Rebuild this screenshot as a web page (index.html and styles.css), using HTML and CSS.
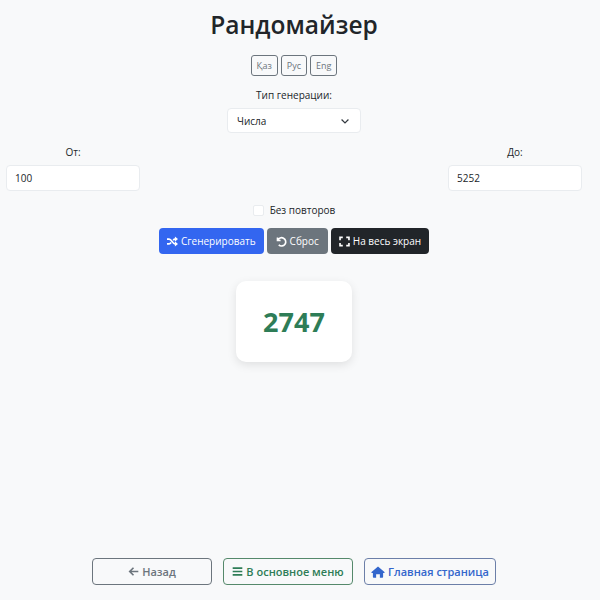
FILE: index.html
```html
<!DOCTYPE html>
<html lang="ru">
<head>
    <meta charset="UTF-8">
    <meta name="viewport" content="width=device-width, initial-scale=1.0">
    <title>Рандомайзер</title>
    <link rel="stylesheet" href="styles.css">
</head>
<body>
    <main class="page">
        <h1>Рандомайзер</h1>

        <div class="langs">
            <button class="lang">Қаз</button>
            <button class="lang">Рус</button>
            <button class="lang">Eng</button>
        </div>

        <div class="type-group">
            <label for="type">Тип генерации:</label>
            <div class="select">
                <span>Числа</span>
                <svg class="chevron" viewBox="0 0 16 16"><path d="M2.500 5.500 8 11l5.500-5.500"/></svg>
            </div>
        </div>

        <div class="range">
            <div class="range-field">
                <label for="from">От:</label>
                <input type="text" id="from" value="100">
            </div>
            <div class="range-field">
                <label for="to">До:</label>
                <input type="text" id="to" value="5252">
            </div>
        </div>

        <label class="check">
            <span class="box"></span>
            Без повторов
        </label>

        <div class="actions">
            <button class="btn btn-primary">
                <svg class="icon" viewBox="0 0 16 16"><path class="line" d="M0 4.500h3c3.800 0 5 7 8.500 7H13M0 11.500h3c1.300 0 2.200-.9 3-2M9 6.200c.8-1 1.500-1.700 2.500-1.700H13"/><path d="M11.500.8 16 4.500l-4.500 3.700zM11.500 7.800l4.500 3.700-4.500 3.700z"/></svg>
                Сгенерировать
            </button>
            <button class="btn btn-secondary">
                <svg class="icon" viewBox="0 0 16 16"><path class="line" d="M2.200 2v4.500h4.500M2.500 6.500A6 6 0 1 1 4 12.800"/></svg>
                Сброс
            </button>
            <button class="btn btn-dark">
                <svg class="icon" viewBox="0 0 16 16"><path class="line" d="M1.500 6V2h4M10.500 2h4v4M14.500 10v4h-4M5.500 14h-4v-4"/></svg>
                На весь экран
            </button>
        </div>

        <div class="result">2747</div>

        <nav class="bottom">
            <a class="nav-btn nav-back" href="#">
                <svg class="icon" viewBox="0 0 16 16"><path class="line" d="M15 8H3M8 2.500 2.500 8 8 13.500"/></svg>
                Назад
            </a>
            <a class="nav-btn nav-menu" href="#">
                <svg class="icon" viewBox="0 0 16 16"><path class="line" d="M1 3h14M1 8h14M1 13h14"/></svg>
                В основное меню
            </a>
            <a class="nav-btn nav-home" href="#">
                <svg class="icon icon-home" viewBox="0 0 18 16"><path d="M9 .5 17.600 8a.8.8 0 0 1-.6 1.300h-1.200v5.200a1 1 0 0 1-1 1h-3.300v-4.500H6.500v4.500H3.200a1 1 0 0 1-1-1V9.300H1A.8.8 0 0 1 .4 8z"/></svg>
                Главная страница
            </a>
        </nav>
    </main>
</body>
</html>
```

FILE: styles.css
```css
* {
    box-sizing: border-box;
}
body {
    margin: 0;
    font-family: "Open Sans", "Noto Sans", Arial, sans-serif;
    background-color: #f8f9fa;
    color: #212529;
}
.page {
    width: 588px;
    height: 600px;
    display: flex;
    flex-direction: column;
    align-items: center;
    padding: 0 6px 15px;
}
h1 {
    margin: 7px 0 0;
    font-size: 24.500px;
    line-height: 36px;
    font-weight: 600;
}
.langs {
    display: flex;
    gap: 3px;
    margin-top: 12px;
}
.lang {
    height: 21px;
    padding: 0 5px;
    font: 9px "Open Sans", Arial, sans-serif;
    color: #6c757d;
    background: transparent;
    border: 1px solid #6c757d;
    border-radius: 3px;
}
.type-group {
    display: flex;
    flex-direction: column;
    align-items: center;
    margin-top: 11px;
}
label {
    font-size: 10px;
    line-height: 16px;
}
.select {
    width: 134px;
    height: 25px;
    margin-top: 5px;
    padding: 0 10px 0 9px;
    display: flex;
    align-items: center;
    justify-content: space-between;
    font-size: 10px;
    background-color: white;
    border: 1px solid #e9ecef;
    border-radius: 4px;
}
.chevron {
    width: 10px;
    height: 10px;
    fill: none;
    stroke: #343a40;
    stroke-width: 2;
}
.range {
    width: 100%;
    display: flex;
    justify-content: space-between;
    margin-top: 11px;
}
.range-field {
    width: 134px;
    display: flex;
    flex-direction: column;
    align-items: center;
    gap: 5px;
}
.range-field input {
    width: 100%;
    height: 26px;
    padding: 0 8px;
    font: 10px "Open Sans", Arial, sans-serif;
    color: #212529;
    background-color: white;
    border: 1px solid #e9ecef;
    border-radius: 4px;
}
.check {
    display: flex;
    align-items: center;
    gap: 6px;
    margin-top: 11px;
}
.box {
    width: 11px;
    height: 11px;
    background-color: white;
    border: 1px solid #e9ecef;
    border-radius: 2px;
}
.actions {
    display: flex;
    gap: 3px;
    margin-top: 10px;
}
.btn {
    height: 26px;
    padding: 0 8px;
    display: flex;
    align-items: center;
    gap: 3px;
    font: 10px "Open Sans", Arial, sans-serif;
    color: white;
    border: none;
    border-radius: 4px;
}
.btn-primary {
    background-color: #3366f0;
}
.btn-secondary {
    padding: 0 9px;
    background-color: #6c757d;
}
.btn-dark {
    background-color: #212529;
}
.icon {
    width: 11px;
    height: 11px;
    fill: currentColor;
    flex-shrink: 0;
}
.icon .line {
    fill: none;
    stroke: currentColor;
    stroke-width: 2.400;
}
.icon-home {
    width: 14px;
    height: 12px;
}
.result {
    width: 116px;
    height: 81px;
    margin-top: 27px;
    display: flex;
    align-items: center;
    justify-content: center;
    font-size: 27px;
    font-weight: 700;
    color: #2e7d57;
    background-color: white;
    border-radius: 10px;
    box-shadow: 0 3px 10px rgba(0,0,0,0.1);
}
.bottom {
    display: flex;
    gap: 11px;
    margin-top: auto;
}
.nav-btn {
    height: 27px;
    display: flex;
    align-items: center;
    justify-content: center;
    gap: 3px;
    font-size: 11px;
    font-weight: 600;
    text-decoration: none;
    border: 1px solid;
    border-radius: 4px;
}
.nav-back {
    width: 120px;
    color: #6c757d;
}
.nav-menu {
    width: 130px;
    color: #2e7d57;
    border-color: #55896b;
}
.nav-home {
    width: 132px;
    color: #3366cc;
    border-color: #6c7fa8;
}
```
